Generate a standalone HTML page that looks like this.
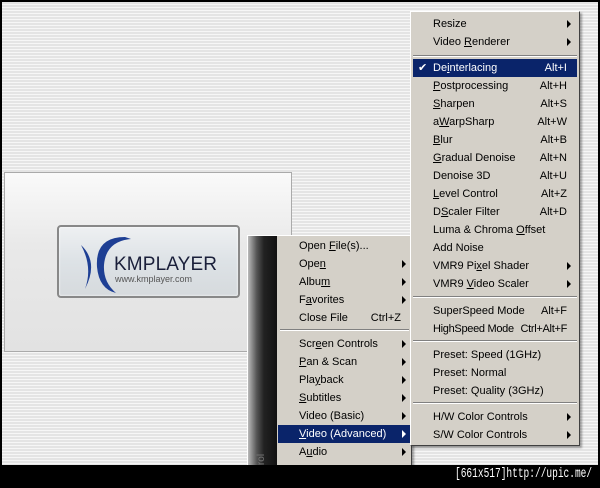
<!DOCTYPE html>
<html><head><style>
*{margin:0;padding:0;box-sizing:border-box}
body{width:600px;height:488px;background:#000;position:relative;overflow:hidden;font-family:"Liberation Sans",sans-serif;font-size:11px;color:#000}
#bg{position:absolute;left:2px;top:2px;width:596px;height:463px;background:repeating-linear-gradient(#e4e4e4 0 2px,#f6f6f6 2px 3px)}
#video{position:absolute;left:4px;top:172px;width:288px;height:180px;background:linear-gradient(#fafafa,#e9e9e9 40%,#e2e2e2);border:1px solid #aaa}
#logo{position:absolute;left:57px;top:225px;width:183px;height:73px;border:2px solid #888;border-radius:4px;background:linear-gradient(#eef0f2,#dde2e6 50%,#d6dadd);box-shadow:inset 0 0 2px #fff}
.menu{position:absolute;background:#d4d0c8;border:1px solid #fff;border-right-color:#404040;border-bottom-color:#404040;box-shadow:2px 2px 2px rgba(0,0,0,.35)}
.it{position:absolute;height:18px;line-height:18px;white-space:nowrap}
.sc{position:absolute;text-align:right}
.ar{position:absolute;width:0;height:0;border-left:4px solid #000;border-top:4px solid transparent;border-bottom:4px solid transparent}
.sep{position:absolute;height:2px;border-top:1px solid #808080;border-bottom:1px solid #fff}
.hl{background:#0a246a;color:#fff}
.hl .ar{border-left-color:#fff}
#bar{position:absolute;left:0;top:465px;width:600px;height:23px;background:#000}
#foot{position:absolute;left:455px;top:466px;color:#fff;font-family:"Liberation Mono",monospace;font-size:14px;transform:scaleX(0.68);transform-origin:left top;white-space:nowrap}
</style></head><body>
<div id="bg"></div>
<div id="video"></div>
<div id="logo">
<svg width="179" height="69" style="position:absolute;left:0;top:0">
<path d="M22 18 Q40 35 26 62 Q34 40 22 18Z" fill="#1e3f94"/>
<path d="M66 10 Q36 10 38 40 Q40 62 57 66 Q44 55 45 38 Q47 14 72 12Z" fill="#1e3f94"/>
<text x="55" y="43" font-family="Liberation Sans,sans-serif" font-size="19" textLength="103" fill="#1a1f3a">KMPLAYER</text>
<text x="56" y="55" font-family="Liberation Sans,sans-serif" font-size="9" fill="#555">www.kmplayer.com</text>
</svg>
</div>
<div class="menu" style="left:247px;top:235px;width:165px;height:240px">
<div style="position:absolute;left:0;top:0;width:29px;height:240px;background:linear-gradient(90deg,#bbb,#555 30%,#222 55%,#111)"></div>
<div style="position:absolute;left:8px;top:218px;color:#777;font-size:10px;transform:rotate(-90deg)">rol</div>
</div>
<div id="lm" style="position:absolute;left:278px;top:237px;width:133px">
<div class="it" style="left:0;top:0;width:133px"><span style="padding-left:21px">Open <u>F</u>ile(s)...</span></div>
<div class="it" style="left:0;top:18px;width:133px"><span style="padding-left:21px">Ope<u>n</u></span><i class="ar" style="right:5px;top:5px"></i></div>
<div class="it" style="left:0;top:36px;width:133px"><span style="padding-left:21px">Albu<u>m</u></span><i class="ar" style="right:5px;top:5px"></i></div>
<div class="it" style="left:0;top:54px;width:133px"><span style="padding-left:21px">F<u>a</u>vorites</span><i class="ar" style="right:5px;top:5px"></i></div>
<div class="it" style="left:0;top:72px;width:133px"><span style="padding-left:21px">Close File</span><span class="sc" style="right:10px">Ctrl+Z</span></div>
<div class="sep" style="left:2px;top:92px;width:129px"></div>
<div class="it" style="left:0;top:98px;width:133px"><span style="padding-left:21px">Scr<u>e</u>en Controls</span><i class="ar" style="right:5px;top:5px"></i></div>
<div class="it" style="left:0;top:116px;width:133px"><span style="padding-left:21px"><u>P</u>an &amp; Scan</span><i class="ar" style="right:5px;top:5px"></i></div>
<div class="it" style="left:0;top:134px;width:133px"><span style="padding-left:21px">Pla<u>y</u>back</span><i class="ar" style="right:5px;top:5px"></i></div>
<div class="it" style="left:0;top:152px;width:133px"><span style="padding-left:21px"><u>S</u>ubtitles</span><i class="ar" style="right:5px;top:5px"></i></div>
<div class="it" style="left:0;top:170px;width:133px"><span style="padding-left:21px">Video (Basic)</span><i class="ar" style="right:5px;top:5px"></i></div>
<div class="it hl" style="left:0;top:188px;width:133px"><span style="padding-left:21px"><u>V</u>ideo (Advanced)</span><i class="ar" style="right:5px;top:5px"></i></div>
<div class="it" style="left:0;top:206px;width:133px"><span style="padding-left:21px">A<u>u</u>dio</span><i class="ar" style="right:5px;top:5px"></i></div>
</div>
<div class="menu" style="left:410px;top:11px;width:170px;height:435px">
<div class="it" style="left:2px;top:3px;width:164px"><span style="padding-left:20px">Resize</span><i class="ar" style="right:6px;top:5px"></i></div>
<div class="it" style="left:2px;top:21px;width:164px"><span style="padding-left:20px">Video <u>R</u>enderer</span><i class="ar" style="right:6px;top:5px"></i></div>
<div class="sep" style="left:2px;top:43px;width:164px"></div>
<div class="it hl" style="left:2px;top:47px;width:164px"><span style="position:absolute;left:5px">✔</span><span style="padding-left:20px">De<u>i</u>nterlacing</span><span class="sc" style="right:10px">Alt+I</span></div>
<div class="it" style="left:2px;top:65px;width:164px"><span style="padding-left:20px"><u>P</u>ostprocessing</span><span class="sc" style="right:10px">Alt+H</span></div>
<div class="it" style="left:2px;top:83px;width:164px"><span style="padding-left:20px"><u>S</u>harpen</span><span class="sc" style="right:10px">Alt+S</span></div>
<div class="it" style="left:2px;top:101px;width:164px"><span style="padding-left:20px">a<u>W</u>arpSharp</span><span class="sc" style="right:10px">Alt+W</span></div>
<div class="it" style="left:2px;top:119px;width:164px"><span style="padding-left:20px"><u>B</u>lur</span><span class="sc" style="right:10px">Alt+B</span></div>
<div class="it" style="left:2px;top:137px;width:164px"><span style="padding-left:20px"><u>G</u>radual Denoise</span><span class="sc" style="right:10px">Alt+N</span></div>
<div class="it" style="left:2px;top:155px;width:164px"><span style="padding-left:20px">Denoise 3D</span><span class="sc" style="right:10px">Alt+U</span></div>
<div class="it" style="left:2px;top:173px;width:164px"><span style="padding-left:20px"><u>L</u>evel Control</span><span class="sc" style="right:10px">Alt+Z</span></div>
<div class="it" style="left:2px;top:191px;width:164px"><span style="padding-left:20px">D<u>S</u>caler Filter</span><span class="sc" style="right:10px">Alt+D</span></div>
<div class="it" style="left:2px;top:209px;width:164px"><span style="padding-left:20px">Luma &amp; Chroma <u>O</u>ffset</span></div>
<div class="it" style="left:2px;top:227px;width:164px"><span style="padding-left:20px">Add Noise</span></div>
<div class="it" style="left:2px;top:245px;width:164px"><span style="padding-left:20px">VMR9 Pi<u>x</u>el Shader</span><i class="ar" style="right:6px;top:5px"></i></div>
<div class="it" style="left:2px;top:263px;width:164px"><span style="padding-left:20px">VMR9 <u>V</u>ideo Scaler</span><i class="ar" style="right:6px;top:5px"></i></div>
<div class="sep" style="left:2px;top:284px;width:164px"></div>
<div class="it" style="left:2px;top:290px;width:164px"><span style="padding-left:20px">SuperSpeed Mode</span><span class="sc" style="right:10px">Alt+F</span></div>
<div class="it" style="left:2px;top:308px;width:164px;letter-spacing:-0.3px"><span style="padding-left:20px">HighSpeed Mode</span><span class="sc" style="right:10px">Ctrl+Alt+F</span></div>
<div class="sep" style="left:2px;top:328px;width:164px"></div>
<div class="it" style="left:2px;top:334px;width:164px"><span style="padding-left:20px">Preset: Speed (1GHz)</span></div>
<div class="it" style="left:2px;top:352px;width:164px"><span style="padding-left:20px">Preset: Normal</span></div>
<div class="it" style="left:2px;top:370px;width:164px"><span style="padding-left:20px">Preset: Quality (3GHz)</span></div>
<div class="sep" style="left:2px;top:390px;width:164px"></div>
<div class="it" style="left:2px;top:396px;width:164px"><span style="padding-left:20px">H/W Color Controls</span><i class="ar" style="right:6px;top:5px"></i></div>
<div class="it" style="left:2px;top:414px;width:164px"><span style="padding-left:20px">S/W Color Controls</span><i class="ar" style="right:6px;top:5px"></i></div>
</div>
<div id="bar"></div>
<div id="foot">[661x517]http://upic.me/</div>
</body></html>
